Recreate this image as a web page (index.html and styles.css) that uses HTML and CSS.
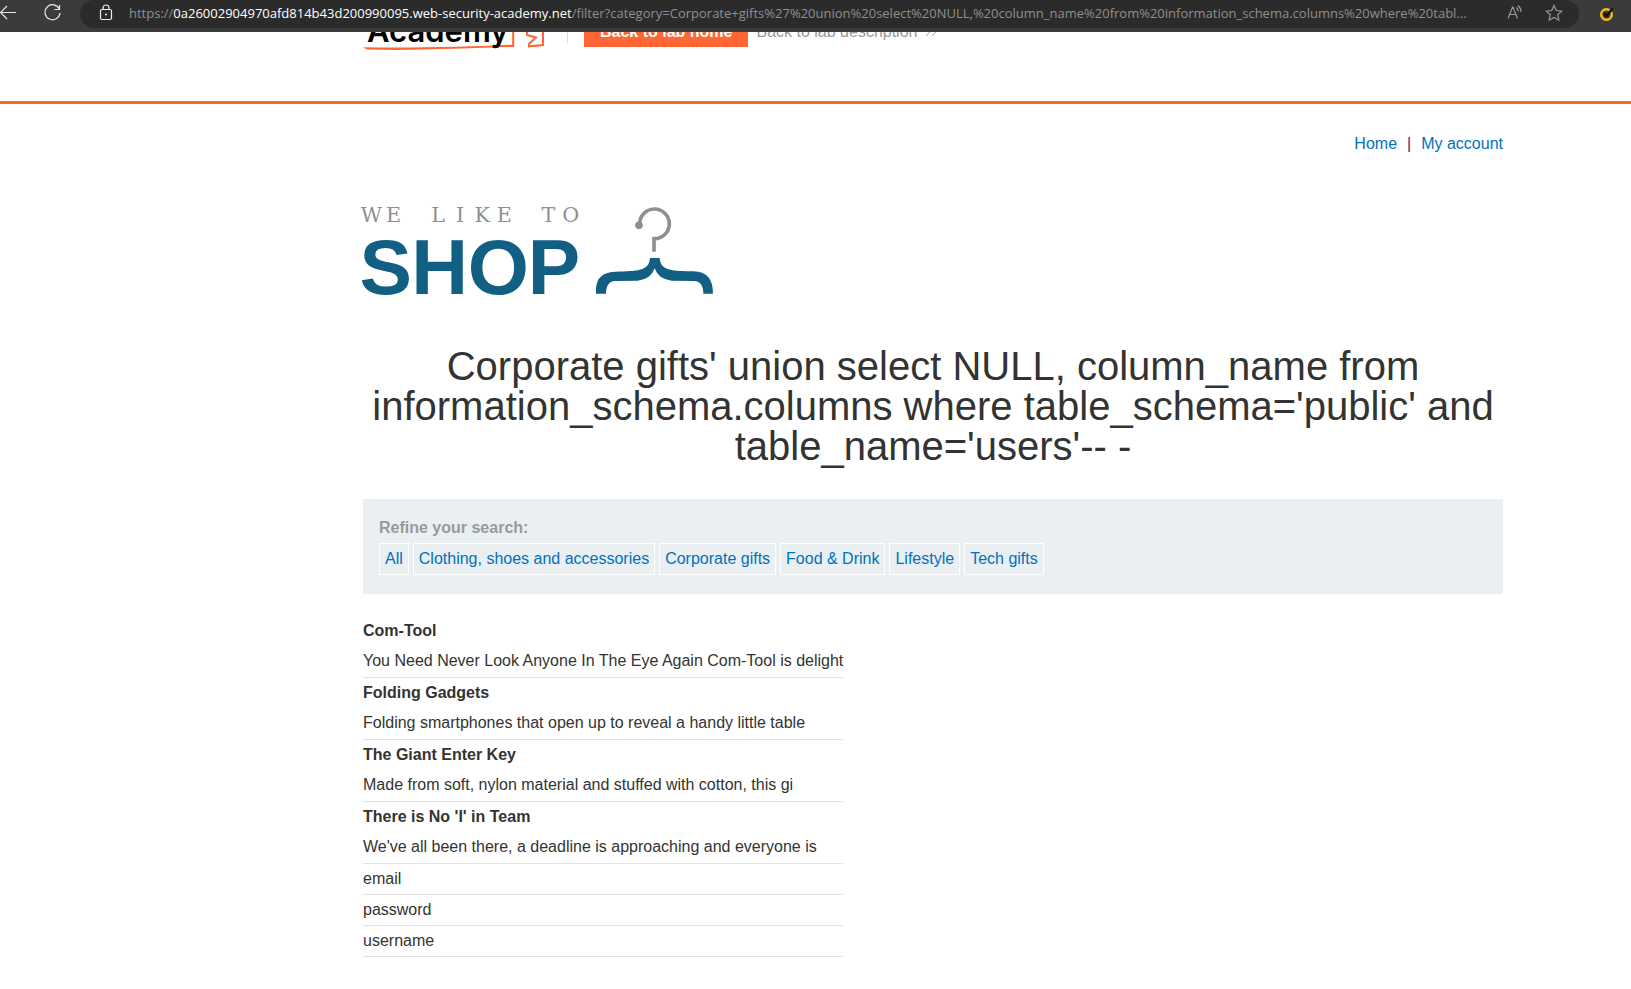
FILE: index.html
```html
<!DOCTYPE html>
<html lang="en">
<head>
<meta charset="utf-8">
<title>We Like to Shop</title>
<link rel="stylesheet" href="styles.css">
</head>
<body>
<div class="toolbar">
  <button class="icon-button" aria-label="Back">
    <svg width="16" height="24" viewBox="0 0 16 24"><path d="M16 12.500H.5M7 6 .5 12.500 7 19"/></svg>
  </button>
  <button class="icon-button reload" aria-label="Refresh">
    <svg width="17" height="24" viewBox="0 0 17 24"><path d="M15.300 9A7.500 7.500 0 1 0 16 13M15.500 5V9.500H10.500"/></svg>
  </button>
  <div class="address">
    <svg class="lock" width="14" height="24" viewBox="0 0 14 24"><rect x="1.500" y="9.500" width="11" height="10" rx="1.500"/><path d="M4 9.500V8a3 3 0 0 1 6 0v1.500"/><circle class="solid" cx="7" cy="14.500" r="1"/></svg>
    <div class="url"><span>https://</span><span class="host">0a26002904970afd814b43d200990095.web-security-academy.net</span><span>/filter?category=Corporate+gifts%27%20union%20select%20NULL,%20column_name%20from%20information_schema.columns%20where%20tabl...</span></div>
    <button class="icon-button dim" aria-label="Read aloud">
      <svg width="16" height="24" viewBox="0 0 16 24"><path d="M1 18.500 5.500 7h.5l4.500 11.500M2.600 14.500h6.300M9.500 7.500q1.800 1.800 1.800 4M11 5.500q3 2.500 3 6.500"/></svg>
    </button>
    <button class="icon-button dim" aria-label="Add to favorites">
      <svg width="18" height="24" viewBox="0 0 18 24"><path d="m9 5.500 2.300 5 5.400.6-4 3.700 1.100 5.400L9 17.500l-4.800 2.700 1.100-5.400-4-3.700 5.400-.6z"/></svg>
    </button>
  </div>
  <button class="icon-button extension" aria-label="Extension">
    <svg width="16" height="24" viewBox="0 0 16 24"><circle class="ring" cx="6.500" cy="14.500" r="5.300"/><path class="tick" d="m4 13 2.500 3 6.500-8"/></svg>
  </button>
</div>

<header class="banner">
  <div class="banner-row">
    <div class="academy">
      <svg class="academy-mark" width="184" height="20" viewBox="0 0 184 20"><path class="swash" d="M0 15.300C50 16 110 15 151 12.600v2.400C110 15.800 50 19 4 17.500z"/><path class="stroke" d="M150.200 0v14"/><path class="stroke" d="M180 0V13L166 14.300V12L173 5.500 164 3V0"/></svg>
      <span>Academy</span>
    </div>
    <a class="lab-home" href="#">Back to lab home</a>
    <a class="lab-description" href="#">Back to lab description
      <svg width="12" height="12" viewBox="0 0 12 12"><path d="M0 0 5 5.500 0 11M6 0l5 5.500L6 11"/></svg>
    </a>
  </div>
</header>

<main class="container">
  <nav class="links"><a href="#">Home</a><span>|</span><a href="#">My account</a></nav>

  <svg class="shop-logo" width="350" height="90" viewBox="39 45 1050 270" role="img" aria-label="We like to shop">
    <text class="tagline" y="97" x="64 131 264 330 397 463 595 662">WELIKETO</text>
    <text class="shop" y="311" x="107 269 445 612">SHOP</text>
    <path class="hook" d="M869 104A44.500 44.500 0 1 1 912 146V185"/>
    <circle class="knob" cx="867" cy="106" r="11.500"/>
    <path class="hanger" d="M738 311V296Q740 246 798 245C860 243 897 244 900 204H929C932 244 969 243 1031 244Q1089 245 1089 311H1060Q1060 275 1033 273L965 272Q925 268 914 235Q903 268 863 272L795 273Q768 275 768 311Z"/>
  </svg>

  <h1>Corporate gifts' union select NULL, column_name from information_schema.columns where table_schema='public' and table_name='users'-- -</h1>

  <section class="filters">
    <strong>Refine your search:</strong>
    <div class="tags">
      <a href="#">All</a>
      <a href="#">Clothing, shoes and accessories</a>
      <a href="#">Corporate gifts</a>
      <a href="#">Food &amp; Drink</a>
      <a href="#">Lifestyle</a>
      <a href="#">Tech gifts</a>
    </div>
  </section>

  <table class="results">
    <tbody>
      <tr><th>Com-Tool</th></tr>
      <tr><td class="detail">You Need Never Look Anyone In The Eye Again Com-Tool is delight</td></tr>
      <tr><th>Folding Gadgets</th></tr>
      <tr><td class="detail">Folding smartphones that open up to reveal a handy little table</td></tr>
      <tr><th>The Giant Enter Key</th></tr>
      <tr><td class="detail">Made from soft, nylon material and stuffed with cotton, this gi</td></tr>
      <tr><th>There is No 'I' in Team</th></tr>
      <tr><td class="detail">We've all been there, a deadline is approaching and everyone is</td></tr>
      <tr><td>email</td></tr>
      <tr><td>password</td></tr>
      <tr><td>username</td></tr>
    </tbody>
  </table>
</main>
</body>
</html>
```

FILE: styles.css
```css
* { box-sizing: border-box; }

body {
  margin: 0;
  background: #fff;
  color: #333332;
  font: 16px/20px "Liberation Sans", Arial, sans-serif;
}

a { color: #0071bc; text-decoration: none; }

/* Browser toolbar */
.toolbar {
  display: flex;
  height: 32px;
  padding-bottom: 4px;
  background: #3b3b3b;
}
.icon-button {
  flex: none;
  display: flex;
  padding: 0;
  border: 0;
  background: none;
  color: #e8e8e8;
}
.toolbar svg { flex: none; fill: none; stroke: currentColor; stroke-width: 1.2; }
.reload { margin-left: 28px; }
.address {
  flex: 1;
  min-width: 0;
  display: flex;
  margin: 0 21px 0 19px;
  padding: 0 16px 0 19px;
  border-radius: 14px;
  background: #2b2b2b;
  color: #f0f0f0;
}
.toolbar .solid { fill: currentColor; stroke: none; }
.url {
  flex: 1;
  min-width: 0;
  margin-left: 16px;
  overflow: hidden;
  white-space: nowrap;
  color: #8f8f8f;
  font: 13px/26px "Open Sans", "Noto Sans", sans-serif;
}
.url .host { color: #fff; }
.dim { margin-left: 12px; color: #9a9a9a; }
.dim + .dim { margin-left: 22px; }
.extension { margin-right: 15px; }
.toolbar .ring { stroke: #f5bd1c; stroke-width: 2.4; }
.toolbar .tick { stroke: #151515; stroke-width: 2.4; }

/* Lab banner, scrolled partly under the toolbar */
.banner {
  height: 72px;
  overflow: hidden;
  border-bottom: 3px solid #ff6633;
}
.banner-row {
  display: flex;
  align-items: flex-start;
  margin: -17px 0 0 363px;
}
.academy {
  position: relative;
  width: 205px;
  height: 28px;
  padding-left: 4px;
  border-right: 1px solid #dcdcdc;
  color: #000;
  font: 600 31px/32px Inter, sans-serif;
}
.academy span { position: relative; }
.academy-mark { position: absolute; left: 0; top: 17px; }
.swash { fill: #ff6633; }
.stroke { fill: none; stroke: #ff6633; stroke-width: 2; }
.lab-home {
  margin-left: 16px;
  padding: 7px 16px 5px;
  background: #ff6633;
  color: #fff;
  font-weight: 700;
}
.lab-description { padding: 7px 8px 5px; color: #999; }
.lab-description svg { margin-left: 4px; fill: none; stroke: #999; }

/* Shop page */
.container { padding: 0 128px 32px 363px; }
.links {
  display: flex;
  justify-content: flex-end;
  gap: 10px;
  padding: 30px 0 51px;
}
.links span { color: #5b1f5b; }
.shop-logo { display: block; overflow: visible; }
.shop-logo text { text-anchor: middle; }
.tagline { fill: #8f8f91; font: 62px "DejaVu Serif", serif; }
.shop { fill: #125f84; font: 700 236px "Liberation Sans", Arial, sans-serif; }
.hook { fill: none; stroke: #8f8f91; stroke-width: 11; }
.knob { fill: #8f8f91; }
.hanger { fill: #125f84; }
h1 {
  margin: 51px 0 33px;
  text-align: center;
  font-size: 40px;
  font-weight: 400;
  line-height: 40px;
}
.filters {
  padding: 19px 16px 19px;
  background: #eaeff2;
}
.filters strong { display: block; margin-bottom: 5px; color: #999; }
.tags { display: flex; flex-wrap: wrap; gap: 4px; }
.tags a { padding: 5px; border: 1px solid #fff; }
.results {
  margin-top: 22px;
  border-collapse: separate;
  border-spacing: 0;
  line-height: 30px;
}
.results th { padding: 0; text-align: left; }
.results td { padding: 0; border-bottom: 1px solid #e4e4e4; }
.results .detail { padding-bottom: 1px; }
```
